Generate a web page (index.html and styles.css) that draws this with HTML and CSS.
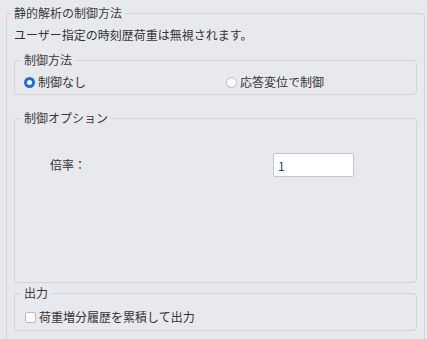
FILE: index.html
```html
<!DOCTYPE html>
<html lang="ja">
<head>
  <meta charset="UTF-8">
  <title>静的解析の制御方法</title>
  <link rel="stylesheet" href="styles.css">
</head>
<body>
<fieldset class="group outer">
  <legend>静的解析の制御方法</legend>
  <p class="note">ユーザー指定の時刻歴荷重は無視されます。</p>

  <fieldset class="group method">
    <legend>制御方法</legend>
    <div class="radio-row">
      <label class="choice"><input type="radio" name="method" checked>制御なし</label>
      <label class="choice"><input type="radio" name="method">応答変位で制御</label>
    </div>
  </fieldset>

  <fieldset class="group options">
    <legend>制御オプション</legend>
    <div class="field-row">
      <label for="scale">倍率：</label>
      <input type="text" id="scale" class="text-input" value="1">
    </div>
  </fieldset>

  <fieldset class="group output">
    <legend>出力</legend>
    <label class="choice"><input type="checkbox">荷重増分履歴を累積して出力</label>
  </fieldset>
</fieldset>
</body>
</html>
```

FILE: styles.css
```css
body {
  font-family: "Noto Sans CJK JP", "Noto Sans", sans-serif;
  font-size: 12px;
  line-height: 16px;
  background-color: #e8e9ed;
  color: #333;
  margin: 0;
  padding: 5px 2px 0 6px;
}
.group {
  margin: 0;
  padding-left: 6px;
  padding-right: 6px;
  border: 1px solid #d3d4d8;
  border-radius: 4px;
  min-width: 0;
}
.group legend {
  padding: 0 3px;
  margin: 0;
  color: #3a3a3a;
  line-height: 16px;
}
.outer {
  padding: 6px 7px 20px 7px;
}
.outer > legend {
  margin-left: -3px;
}
.note {
  margin: 0 0 9px 0;
}
.method {
  padding-top: 6px;
  padding-bottom: 4px;
}
.radio-row {
  display: grid;
  grid-template-columns: 202px 1fr;
  margin-left: 3px;
}
.choice {
  display: flex;
  align-items: center;
  gap: 3px;
}
.choice input {
  appearance: none;
  margin: 0;
  width: 11px;
  height: 11px;
  background: #fff;
  border: 1px solid #b9bbc0;
}
.choice input[type="radio"] {
  border-radius: 50%;
}
.choice input[type="radio"]:checked {
  border: 3px solid #1a6fe6;
}
.choice input[type="checkbox"] {
  border-radius: 2px;
}
.options {
  margin-top: 15px;
  padding-top: 27px;
  padding-bottom: 105px;
}
.field-row {
  display: grid;
  grid-template-columns: 223px 81px;
  align-items: center;
  margin-left: 29px;
}
.text-input {
  box-sizing: border-box;
  height: 24px;
  margin: 0;
  padding: 0 4px;
  border: 1px solid #c3c5ca;
  border-radius: 2px;
  background: #fff;
  color: #1c3f8c;
  font: inherit;
}
.output {
  margin-top: 2px;
  padding-top: 8px;
  padding-bottom: 5px;
}
.output .choice {
  margin-left: 4px;
}
```
